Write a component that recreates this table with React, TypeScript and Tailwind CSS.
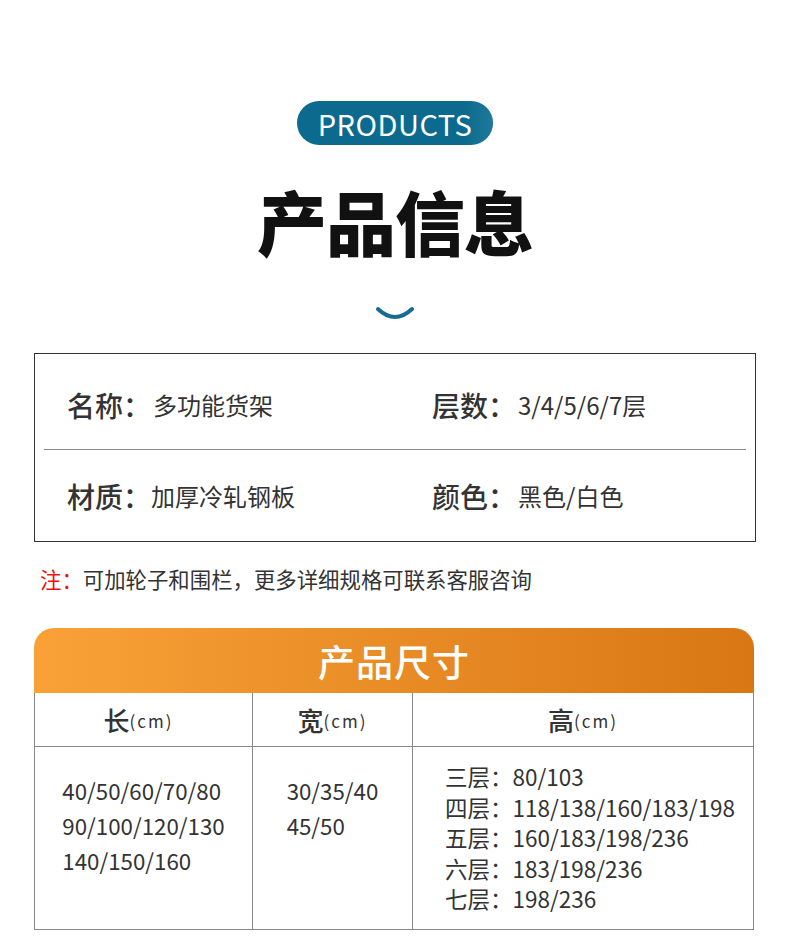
import React from "react";

const F = { fontFamily: '"Noto Sans CJK SC", "Noto Sans", sans-serif' };

export default function App() {
  return (
    <div className="w-[790px] h-[948px] bg-white text-[#333] overflow-hidden" style={F}>
      <div className="flex flex-col items-center pt-[101px]">
        <div className="relative w-[196px] h-[44px] rounded-full bg-[#0b6a8d] flex items-center justify-center overflow-hidden">
          <div className="absolute right-0 top-0 h-full w-[30px] bg-gradient-to-r from-transparent to-[#3d8fb0]/40 rounded-r-full" />
          <span className="relative text-white text-[29px] leading-none tracking-[0.5px]">PRODUCTS</span>
        </div>
        <div className="mt-[34px] text-[70px] leading-[84px] font-black text-[#111] tracking-[-1px]">产品信息</div>
        <svg width="42" height="20" viewBox="0 0 42 20" className="mt-[42px]">
          <path d="M4 4 Q21 20 38 4" fill="none" stroke="#176b8e" strokeWidth="4" strokeLinecap="round" />
        </svg>
      </div>

      <div className="mx-[34px] mt-[28px] w-[722px] border border-[#333]">
        <div className="h-[95px] flex items-center pl-[32px] pt-[6px]">
          <div className="w-[365px] flex items-center">
            <span className="text-[28px] font-medium text-[#333]">名称：</span>
            <span className="text-[24px] text-[#333] ml-[2px]">多功能货架</span>
          </div>
          <div className="flex items-center">
            <span className="text-[28px] font-medium text-[#333]">层数：</span>
            <span className="text-[24px] text-[#333] ml-[2px]">3/4/5/6/7层</span>
          </div>
        </div>
        <div className="mx-[9px] h-px bg-[#8a8a8a]" />
        <div className="h-[91px] flex items-center pl-[32px]">
          <div className="w-[365px] flex items-center">
            <span className="text-[28px] font-medium text-[#333]">材质：</span>
            <span className="text-[24px] text-[#333]">加厚冷轧钢板</span>
          </div>
          <div className="flex items-center">
            <span className="text-[28px] font-medium text-[#333]">颜色：</span>
            <span className="text-[24px] text-[#333] ml-[2px]">黑色/白色</span>
          </div>
        </div>
      </div>

      <div className="ml-[40px] mt-[22px] text-[21.4px] leading-[30px] text-[#333]">
        <span className="text-[#f01010]">注：</span>可加轮子和围栏，更多详细规格可联系客服咨询
      </div>

      <div className="ml-[34px] mt-[34px] w-[720px]">
        <div className="h-[65px] rounded-t-[20px] bg-gradient-to-r from-[#f9a136] to-[#d87713] flex items-center justify-center">
          <span className="text-white text-[37px] font-medium leading-none tracking-[1px] mt-[2px]">产品尺寸</span>
        </div>
        <div className="border-x border-b border-[#888]">
          <div className="flex h-[54px] border-b border-[#888]">
            <div className="w-[217px] flex items-center justify-center pr-[10px]">
              <span className="text-[26px] font-medium">长</span>
              <span className="text-[17px] tracking-[2px] mt-[3px]">(cm)</span>
            </div>
            <div className="w-[160px] border-l border-[#888] flex items-center justify-center">
              <span className="text-[26px] font-medium">宽</span>
              <span className="text-[17px] tracking-[2px] mt-[3px]">(cm)</span>
            </div>
            <div className="flex-1 border-l border-[#888] flex items-center justify-center">
              <span className="text-[26px] font-medium">高</span>
              <span className="text-[17px] tracking-[2px] mt-[3px]">(cm)</span>
            </div>
          </div>
          <div className="flex h-[182px]">
            <div className="w-[217px] flex justify-center pt-[26px]">
              <div className="text-[22.3px] leading-[35px]">
                <div>40/50/60/70/80</div>
                <div>90/100/120/130</div>
                <div>140/150/160</div>
              </div>
            </div>
            <div className="w-[160px] border-l border-[#888] flex justify-center pt-[26px]">
              <div className="text-[22.3px] leading-[35px]">
                <div>30/35/40</div>
                <div>45/50</div>
              </div>
            </div>
            <div className="flex-1 border-l border-[#888] pl-[32px] pt-[14px]">
              <div className="text-[22.5px] leading-[30.5px]">
                <div>三层：80/103</div>
                <div>四层：118/138/160/183/198</div>
                <div>五层：160/183/198/236</div>
                <div>六层：183/198/236</div>
                <div>七层：198/236</div>
              </div>
            </div>
          </div>
        </div>
      </div>
    </div>
  );
}
